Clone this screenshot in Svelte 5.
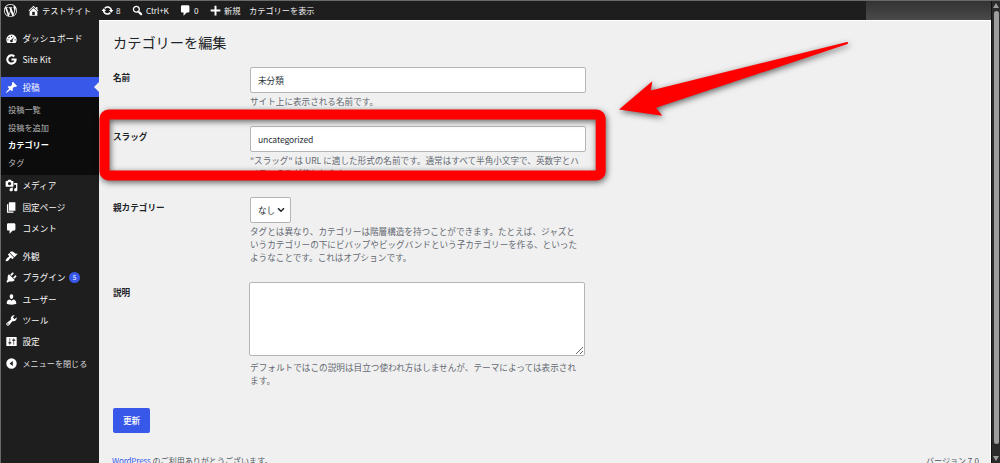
<script>
    let name = $state("未分類");
    let slug = $state("uncategorized");
    let parent = $state("なし");
    let description = $state("");

    const submenu = ["投稿一覧", "投稿を追加", "カテゴリー", "タグ"];

    // Iconos del panel (lienzo de 20x20)
    const icons = {
        wordpress: "M20 10c0-5.51-4.49-10-10-10C4.48 0 0 4.49 0 10c0 5.52 4.48 10 10 10 5.51 0 10-4.48 10-10zM7.78 15.37L4.37 6.22c.55-.02 1.17-.08 1.17-.08.5-.06.44-1.13-.06-1.11 0 0-1.45.11-2.37.11-.18 0-.37 0-.58-.01C4.12 2.69 6.87 1.11 10 1.11c2.33 0 4.45.87 6.05 2.34-.68-.11-1.65.39-1.65 1.58 0 .74.45 1.36.9 2.1.35.61.55 1.36.55 2.46 0 1.49-1.4 5-1.4 5l-3.03-8.37c.54-.02.82-.17.82-.17.5-.05.44-1.25-.06-1.22 0 0-1.44.12-2.38.12-.87 0-2.33-.12-2.33-.12-.5-.03-.56 1.2-.06 1.22l.92.08 1.26 3.41zM17.41 10c.24-.64.74-1.87.43-4.25.7 1.29 1.05 2.71 1.05 4.25 0 3.29-1.73 6.24-4.4 7.78.97-2.59 1.94-5.2 2.92-7.78zM6.1 18.09C3.12 16.65 1.11 13.53 1.11 10c0-1.3.23-2.48.72-3.59C3.25 10.3 4.67 14.2 6.1 18.09zm4.03-6.63l2.58 6.98c-.86.29-1.76.45-2.71.45-.79 0-1.57-.11-2.29-.33.81-2.38 1.62-4.74 2.42-7.1z",
        home: "M16 8.5l1.53 1.53-1.06 1.06L10 4.6l-6.47 6.49-1.06-1.06L10 2.5l4 4v-2h2v4zm-6-2.46l6 5.99V18H4v-5.97zM12 17v-5H8v5h4z",
        update: "M10.2 3.28c3.53 0 6.43 2.61 6.92 6h2.08l-3.5 4-3.5-4h2.32c-.45-1.97-2.21-3.45-4.32-3.45-1.45 0-2.73.71-3.54 1.78L4.95 5.66C6.23 4.2 8.11 3.28 10.2 3.28zm-.4 13.44c-3.52 0-6.43-2.61-6.92-6H.8l3.5-4c1.17 1.33 2.33 2.67 3.5 4H5.48c.45 1.97 2.21 3.45 4.32 3.45 1.45 0 2.73-.71 3.54-1.78l1.71 1.95c-1.28 1.46-3.15 2.38-5.25 2.38z",
        search: "M12.14 4.18c1.87 1.87 2.11 4.75.72 6.89.12.1.22.21.36.31.2.16.47.36.81.59.34.24.56.39.66.47.42.31.73.57.94.78.32.32.6.65.84 1 .25.35.44.69.59 1.04.14.35.21.68.18 1-.02.32-.14.59-.36.81s-.49.34-.81.36c-.31.02-.65-.04-.99-.19-.35-.14-.7-.34-1.04-.59-.35-.24-.68-.52-1-.84-.21-.21-.47-.52-.77-.93-.1-.13-.25-.35-.47-.66-.22-.32-.4-.57-.56-.78-.16-.2-.29-.35-.44-.5-2.07 1.09-4.69.76-6.44-.98-2.14-2.15-2.14-5.64 0-7.78 2.15-2.15 5.63-2.15 7.78 0zm-1.41 6.36c1.36-1.37 1.36-3.58 0-4.95-1.37-1.37-3.59-1.37-4.95 0-1.37 1.37-1.37 3.58 0 4.95 1.36 1.37 3.58 1.37 4.95 0z",
        comment: "M5 2h9c1.1 0 2 .9 2 2v7c0 1.1-.9 2-2 2h-2l-5 5v-5H5c-1.1 0-2-.9-2-2V4c0-1.1.9-2 2-2z",
        plus: "M17.5 8.5v3h-6v6h-3v-6h-6v-3h6v-6h3v6z",
        dashboard: "M3.76 17h12.48A8 8 0 1 0 3.76 17zM9 6.8a1 1 0 1 0 2 0 1 1 0 1 0-2 0zM5.2 8.4a1 1 0 1 0 2 0 1 1 0 1 0-2 0zM3.5 12a1 1 0 1 0 2 0 1 1 0 1 0-2 0zM14.5 12a1 1 0 1 0 2 0 1 1 0 1 0-2 0zM14.3 7.2l-2.7 5.6a2 2 0 1 1-1.8-1z",
        google: "M17.8 8.6H10v3.1h4.4c-.5 1.9-2.1 3.1-4.4 3.1A4.8 4.8 0 1 1 13.2 6.4l2.3-2.3A8 8 0 1 0 18 10c0-.5-.1-1-.2-1.4z",
        pin: "M10.44 3.02l1.82-1.82 6.36 6.35-1.83 1.82c-1.05-.68-2.48-.57-3.41.36l-.75.75c-.92.93-1.04 2.35-.35 3.41l-1.83 1.82-2.41-2.41-2.8 2.79c-.42.42-3.38 2.71-3.8 2.29s1.86-3.39 2.28-3.81l2.79-2.79L4.1 9.36l1.83-1.82c1.05.69 2.48.57 3.4-.36l.75-.75c.93-.92 1.05-2.35.36-3.41z",
        media: "M13 11V4c0-.55-.45-1-1-1h-1.67L9 1H5L3.67 3H2c-.55 0-1 .45-1 1v7c0 .55.45 1 1 1h10c.55 0 1-.45 1-1zM7 4.5c1.38 0 2.5 1.12 2.5 2.5S8.38 9.5 7 9.5 4.5 8.38 4.5 7 5.62 4.5 7 4.5zM14 6h5v10.5c0 1.38-1.12 2.5-2.5 2.5S14 17.88 14 16.5s1.12-2.5 2.5-2.5c.17 0 .34.02.5.05V9h-3V6zm-4 8.05V13h2v3.5c0 1.38-1.12 2.5-2.5 2.5S7 17.88 7 16.5 8.12 14 9.5 14c.17 0 .34.02.5.05z",
        page: "M6 15V2h10v13H6zm-1 1h8v2H3V5h2v11z",
        appearance: "M14.48 11.06L7.41 3.99l1.5-1.5c.5-.56 2.3-.47 3.51.32 1.21.8 1.43 1.28 2.91 2.1 1.18.64 2.45 1.26 4.45.85zm-.71.71L6.7 4.7 4.93 6.47c-.39.39-.39 1.02 0 1.41l1.06 1.06c.39.39.39 1.03 0 1.42-.6.6-1.43 1.11-2.21 1.69-.35.26-.7.53-1.01.84C1.43 14.23.4 16.08 1.4 17.07c.99 1 2.84-.03 4.18-1.36.31-.31.58-.66.85-1.02.57-.78 1.08-1.61 1.69-2.21.39-.39 1.02-.39 1.41 0l1.06 1.06c.39.39 1.02.39 1.41 0z",
        plugins: "M13.11 4.36L9.87 7.6 8 5.73l3.24-3.24c.35-.34 1.05-.2 1.56.32.52.51.66 1.21.31 1.55zm-8 1.77l.91-1.12 9.01 9.01-1.19.84c-.71.71-2.63 1.16-3.82 1.16H6.14L4.9 17.26c-.59.59-1.54.59-2.12 0-.59-.58-.59-1.53 0-2.12l1.24-1.24v-3.88c0-1.13.4-3.19 1.09-3.89zm7.26 3.97l3.24-3.24c.34-.35 1.04-.21 1.55.31.52.51.66 1.21.31 1.55l-3.24 3.25z",
        users: "M10 9.25c-2.27 0-2.73-3.44-2.73-3.44C7 4.02 7.82 2 9.97 2c2.16 0 2.98 2.02 2.71 3.81 0 0-.41 3.44-2.68 3.44zm0 2.57L12.72 10c2.39 0 4.52 2.33 4.52 4.53v2.49s-3.65 1.13-7.24 1.13c-3.65 0-7.24-1.13-7.24-1.13v-2.49c0-2.25 1.94-4.48 4.47-4.48z",
        tools: "M16.68 9.77c-1.34 1.34-3.3 1.67-4.95.99l-5.41 6.52c-.99.99-2.59.99-3.58 0s-.99-2.59 0-3.57l6.52-5.42c-.68-1.65-.35-3.61.99-4.95 1.28-1.28 3.12-1.62 4.72-1.06l-2.89 2.89 2.82 2.82 2.86-2.87c.53 1.58.18 3.39-1.08 4.65zM3.81 16.21c.4.39 1.04.39 1.43 0 .4-.4.4-1.04 0-1.43-.39-.4-1.03-.4-1.43 0-.39.39-.39 1.03 0 1.43z",
        settings: "M18 16V4c0-.55-.45-1-1-1H3c-.55 0-1 .45-1 1v12c0 .55.45 1 1 1h14c.55 0 1-.45 1-1zM8 11h1c.55 0 1 .45 1 1s-.45 1-1 1H8v1.5c0 .28-.22.5-.5.5s-.5-.22-.5-.5V13H6c-.55 0-1-.45-1-1s.45-1 1-1h1V5.5c0-.28.22-.5.5-.5s.5.22.5.5V11zm5-2h-1c-.55 0-1-.45-1-1s.45-1 1-1h1V5.5c0-.28.22-.5.5-.5s.5.22.5.5V7h1c.55 0 1 .45 1 1s-.45 1-1 1h-1v5.5c0 .28-.22.5-.5.5s-.5-.22-.5-.5V9z",
        collapse: "M10 2a8 8 0 1 0 0 16 8 8 0 0 0 0-16zm2 12L7 10l5-4z"
    };

    const top = [
        { icon: "dashboard", label: "ダッシュボード" },
        { icon: "google", label: "Site Kit" }
    ];
    const middle = [
        { icon: "media", label: "メディア" },
        { icon: "page", label: "固定ページ" },
        { icon: "comment", label: "コメント" }
    ];
    const bottom = [
        { icon: "appearance", label: "外観" },
        { icon: "plugins", label: "プラグイン", count: 5 },
        { icon: "users", label: "ユーザー" },
        { icon: "tools", label: "ツール" },
        { icon: "settings", label: "設定" }
    ];
</script>

{#snippet icon(id)}
    <svg class="icon" viewBox="0 0 20 20"><path fill-rule="evenodd" d={icons[id]} /></svg>
{/snippet}

{#snippet menu(items)}
    {#each items as item}
        <li class="item">
            {@render icon(item.icon)}<span>{item.label}</span>
            {#if item.count}<b class="count">{item.count}</b>{/if}
        </li>
    {/each}
{/snippet}

<div class="screen">
    <div class="page">
        <header class="bar">
            <span class="logo">{@render icon("wordpress")}</span>
            <span class="site">{@render icon("home")}テストサイト</span>
            <span class="updates">{@render icon("update")}8</span>
            <span class="search">{@render icon("search")}Ctrl+K</span>
            <span class="comments">{@render icon("comment")}0</span>
            <span class="new">{@render icon("plus")}新規</span>
            <span>カテゴリーを表示</span>
            <span class="account"></span>
        </header>

        <div class="body">
            <nav>
                <ul>
                    {@render menu(top)}
                    <li class="item current">{@render icon("pin")}<span>投稿</span></li>
                    <li class="sub">
                        {#each submenu as entry}
                            <a href="#top" class:active={entry === "カテゴリー"}>{entry}</a>
                        {/each}
                    </li>
                    {@render menu(middle)}
                    <li class="gap"></li>
                    {@render menu(bottom)}
                    <li class="item close">{@render icon("collapse")}<span>メニューを閉じる</span></li>
                </ul>
            </nav>

            <main>
                <h1>カテゴリーを編集</h1>

                <div class="row name">
                    <label for="name">名前</label>
                    <div>
                        <input id="name" bind:value={name} />
                        <p>サイト上に表示される名前です。</p>
                    </div>
                </div>
                <div class="row slug">
                    <label for="slug">スラッグ</label>
                    <div>
                        <input id="slug" bind:value={slug} />
                        <p>"スラッグ" は URL に適した形式の名前です。通常はすべて半角小文字で、英数字とハ<br />イフンのみが使われます。</p>
                    </div>
                </div>
                <div class="row parent">
                    <label for="parent">親カテゴリー</label>
                    <div>
                        <button id="parent" class="select">
                            {parent}
                            <svg viewBox="0 0 8 6"><path d="M1 1.3l3 3 3-3" /></svg>
                        </button>
                        <p>タグとは異なり、カテゴリーは階層構造を持つことができます。たとえば、ジャズと<br />いうカテゴリーの下にビバップやビッグバンドという子カテゴリーを作る、といった<br />ようなことです。これはオプションです。</p>
                    </div>
                </div>
                <div class="row desc">
                    <label for="description">説明</label>
                    <div>
                        <textarea id="description" bind:value={description}></textarea>
                        <p>デフォルトではこの説明は目立つ使われ方はしませんが、テーマによっては表示され<br />ます。</p>
                    </div>
                </div>

                <button class="submit">更新</button>

                <footer>
                    <span><a href="#top">WordPress</a> のご利用ありがとうございます。</span>
                    <span>バージョン 7.0</span>
                </footer>
            </main>
        </div>
    </div>

    <div class="scrollbar">
        <i class="up"></i>
        <i class="thumb"></i>
        <i class="down"></i>
    </div>

    <!-- Marco y flecha que señalan el campo del slug -->
    <svg class="marks" viewBox="0 0 1000 463">
        <g class="mark">
            <path fill-rule="evenodd" d="M108.5 109.5H596.7a9 9 0 0 1 9 9V171.5a9 9 0 0 1-9 9H108.5a9 9 0 0 1-9-9V118.5a9 9 0 0 1 9-9zM109.5 119.5V170.5H595.7V119.5z" />
            <path d="M619 109.5L652.3 81.2 650.8 90.5 847 42Q849 42.5 847.5 44L656 107.8 662.3 115.7z" />
        </g>
    </svg>
</div>

<style>
    :global(body) { margin: 0; overflow: hidden; }
    * { box-sizing: border-box; }

    .screen { position: relative; display: flex; width: 1000px; height: 463px; overflow: hidden; border-top: 1px solid #686b69; border-left: 1px solid #686b69; background: #1e1e1e; font: 8.6px/13px "Noto Sans CJK JP", sans-serif; color: #1d2327; }
    .page { width: 990px; display: flex; flex-direction: column; }
    .icon { width: 13px; height: 13px; flex: none; fill: #fff; }

    /* Barra superior */
    .bar { height: 19px; flex: none; display: flex; align-items: center; padding-left: 3px; color: #f0f0f1; font-size: 8.2px; white-space: nowrap; }
    .bar span { display: flex; align-items: center; gap: 2.5px; }
    .logo { width: 22.5px; }
    .site { width: 74px; }
    .updates { width: 30px; }
    .search { width: 48px; letter-spacing: -0.1px; }
    .comments { width: 30px; }
    .new { width: 40.5px; }
    .bar .account { align-self: stretch; width: 125px; margin-left: auto; background: linear-gradient(#333, #4a4a4a); }

    /* Menú lateral */
    .body { flex: 1; display: flex; min-height: 0; }
    nav { width: 98px; flex: none; color: #f6f6f6; }
    ul { list-style: none; margin: 0; padding: 7.5px 0 0; }
    .item { display: flex; align-items: center; height: 21.4px; padding-left: 4px; gap: 4.5px; white-space: nowrap; }
    .current { position: relative; margin-top: 6.7px; height: 20.5px; background: #3858e9; color: #fff; }
    .current::after { content: ""; position: absolute; right: 0; top: 5px; border: 5px solid transparent; border-left: 0; border-right-color: #f0f0f0; }
    .sub { display: flex; flex-direction: column; height: 77.5px; padding: 4px 0 0 7px; background: #0c0c0c; }
    .sub a { height: 17.5px; line-height: 17.5px; font-size: 8.2px; color: #b5b5b5; text-decoration: none; }
    .sub .active { color: #fff; font-weight: 700; }
    .gap { height: 6.4px; }
    .count { width: 11px; height: 11px; margin-left: -1px; border-radius: 50%; background: #3858e9; color: #fff; font-size: 6.5px; font-weight: 400; line-height: 11px; text-align: center; }
    .close { font-size: 8.1px; color: #dcdcde; }

    /* Formulario */
    main { flex: 1; padding-left: 14px; background: #f0f0f0; border-right: 1px solid #fff; border-top: 1px solid #fff; }
    h1 { margin: 10px 0 0; height: 36px; font-size: 14.2px; font-weight: 400; line-height: 22px; }
    .row { display: flex; }
    .row label { width: 137px; flex: none; padding-top: 3.5px; font-weight: 700; }
    .name { height: 59px; }
    .slug { height: 71px; }
    .parent { height: 85px; }
    .desc { height: 127px; }
    input, textarea { display: block; width: 336px; border: 1px solid #b3b5b7; border-radius: 2px; background: #fff; color: #2c3338; font: inherit; outline: none; }
    input { height: 26px; padding: 0 7px 1px; }
    #slug { letter-spacing: -0.13px; }
    textarea { height: 74px; margin-left: -1px; resize: both; }
    p { margin: 2px 0 0; color: #646970; white-space: nowrap; }
    .name p, .slug p { margin-top: 1.5px; }
    .desc p { margin-top: 5px; font-size: 8.65px; }
    .select { display: flex; align-items: center; justify-content: space-between; width: 41px; height: 26px; padding: 0 5px 0 7px; border: 1px solid #b3b5b7; border-radius: 2px; background: #fff; color: #2c3338; font: inherit; }
    .select svg { width: 8px; height: 6px; fill: none; stroke: #1d2327; stroke-width: 1.5; }
    .submit { display: block; width: 37px; height: 25px; margin-top: -1px; padding: 0; border: 0; border-radius: 2px; background: #3858e9; color: #fff; font: inherit; font-weight: 500; }
    footer { display: flex; justify-content: space-between; margin: 21px 11px 0 -1px; font-size: 8.05px; color: #50575e; white-space: nowrap; }
    footer a { color: #3858e9; letter-spacing: -0.15px; }

    /* Barra de desplazamiento */
    .scrollbar { flex: 1; display: flex; flex-direction: column; align-items: center; background: #2b2b2b; padding: 2px 0; border-left: 1px solid #111; }
    .up { border: 3px solid transparent; border-top: 0; border-bottom: 5px solid #9d9d9d; }
    .thumb { width: 5px; height: 433px; margin-top: 3px; border-radius: 3px; background: #9d9d9d; }
    .down { margin-top: 12px; border: 3px solid transparent; border-bottom: 0; border-top: 5px solid #9d9d9d; }

    .marks { position: absolute; left: -1px; top: -1px; width: 1000px; height: 463px; pointer-events: none; }
    .mark { fill: #f00; filter: drop-shadow(1px 2px 3px rgba(0, 0, 0, 0.6)); }
</style>
